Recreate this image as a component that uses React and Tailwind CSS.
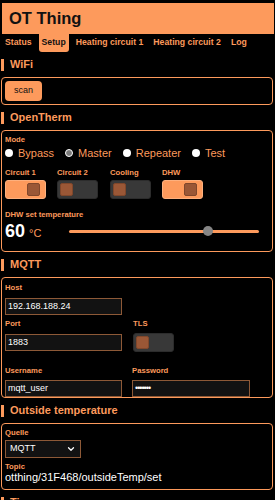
import { ChevronDown } from "lucide-react";

const OR = "#fd9a5c";

function Heading({ title }) {
  return (
    <div className="h-[25px] flex items-center">
      <div className="w-[3px] h-[12px] bg-[#fd9a5c] ml-[1px]"></div>
      <span className="ml-[6px] text-[11px] font-bold text-[#fd9a5c] leading-none">{title}</span>
    </div>
  );
}

function Box({ children, className = "" }) {
  return (
    <div className={"mx-[1px] mr-[2px] border border-[#fd9a5c] rounded-[4px] px-[3px] " + className}>
      {children}
    </div>
  );
}

function Label({ children, className = "" }) {
  return (
    <div className={"text-[7.7px] font-bold text-[#fd9a5c] leading-[9px] " + className}>{children}</div>
  );
}

function Toggle({ on }) {
  return (
    <div
      className={
        "w-[41px] h-[19px] rounded-[3px] border flex items-center px-[2px] " +
        (on ? "bg-[#fd9a5c] border-[#fdb07e]" : "bg-[#383838] border-[#2c2c2c]")
      }
    >
      <div
        className={
          "w-[13px] h-[13px] rounded-[2px] bg-[#9a5736] border border-[#80472b] " +
          (on ? "ml-[19px]" : "")
        }
      ></div>
    </div>
  );
}

function Radio({ label, checked }) {
  return (
    <div className="flex items-center mr-[11px]">
      <span
        className={
          "w-[8px] h-[8px] rounded-full " +
          (checked ? "bg-[#7a7a7a] border-[1.5px] border-white" : "bg-white")
        }
      ></span>
      <span className="ml-[5px] text-[11px] text-[#fd9a5c] leading-[14px]">{label}</span>
    </div>
  );
}

function Input({ value, className = "" }) {
  return (
    <div
      className={
        "h-[17px] bg-[#121212] border border-[#8d5937] flex items-center px-[2px] text-[9px] text-white " +
        className
      }
    >
      {value}
    </div>
  );
}

export default function App() {
  const tabs = ["Status", "Setup", "Heating circuit 1", "Heating circuit 2", "Log"];

  return (
    <div className="min-h-screen bg-black overflow-hidden" style={{ fontFamily: '"Liberation Sans", Arial, sans-serif' }}>
      {/* Header */}
      <div className="pt-[3px]">
        <div className="mx-[2px] mr-[1px] h-[31px] bg-[#fd9a5c] flex items-center pl-[7px]">
          <span className="text-[16.5px] font-bold text-[#111] leading-none">OT Thing</span>
        </div>
      </div>

      {/* Tabs */}
      <div className="h-[18px] flex items-stretch pl-[2px] text-[8.7px] font-bold">
        {tabs.map((t) => (
          <div
            key={t}
            className={
              "flex items-center px-[3px] mr-[4px] " +
              (t === "Setup" ? "bg-[#fd9a5c] text-[#111] rounded-b-[3px]" : "text-[#fd9a5c]")
            }
          >
            {t}
          </div>
        ))}
      </div>

      {/* WiFi */}
      <Heading title="WiFi" />
      <Box className="py-[3px]">
        <button className="w-[37px] h-[20px] bg-[#fd9a5c] rounded-[4px] text-[9px] text-[#111] flex items-center justify-center">
          scan
        </button>
      </Box>

      {/* OpenTherm */}
      <Heading title="OpenTherm" />
      <Box className="h-[122px] pt-[4px]">
        <Label>Mode</Label>
        <div className="flex items-center mt-[1px] h-[16px]">
          <Radio label="Bypass" />
          <Radio label="Master" checked />
          <Radio label="Repeater" />
          <Radio label="Test" />
        </div>
        <div className="grid grid-cols-[52px_53px_52px_52px] mt-[7px]">
          {[
            ["Circuit 1", true],
            ["Circuit 2", false],
            ["Cooling", false],
            ["DHW", true],
          ].map(([l, on]) => (
            <div key={l}>
              <Label>{l}</Label>
              <div className="mt-[3px]">
                <Toggle on={on} />
              </div>
            </div>
          ))}
        </div>
        <Label className="mt-[11px]">DHW set temperature</Label>
        <div className="flex items-center h-[22px] mt-[1px]">
          <div className="w-[64px] flex items-baseline">
            <span className="text-[18px] font-bold text-white leading-none">60</span>
            <span className="ml-[4px] text-[11px] text-[#fd9a5c] leading-none">°C</span>
          </div>
          <div className="relative w-[190px] h-[3px] bg-[#fd9a5c] rounded-full">
            <div className="absolute left-[134px] top-[-4px] w-[10px] h-[10px] rounded-full bg-[#858585]"></div>
          </div>
        </div>
      </Box>

      {/* MQTT */}
      <Heading title="MQTT" />
      <Box className="h-[121px] pt-[5px]">
        <Label>Host</Label>
        <Input value="192.168.188.24" className="w-[117px] mt-[6px]" />
        <div className="grid grid-cols-[128px_1fr] mt-[4px]">
          <div>
            <Label>Port</Label>
            <Input value="1883" className="w-[117px] mt-[6px]" />
          </div>
          <div>
            <Label>TLS</Label>
            <div className="mt-[5px]">
              <Toggle on={false} />
            </div>
          </div>
        </div>
        <div className="grid grid-cols-[127px_1fr] mt-[14px]">
          <div>
            <Label>Username</Label>
            <Input value="mqtt_user" className="w-[117px] mt-[5px]" />
          </div>
          <div>
            <Label>Password</Label>
            <Input value="•••••••" className="w-[118px] mt-[5px] text-[7px] tracking-[-1px]" />
          </div>
        </div>
      </Box>

      {/* Outside temperature */}
      <Heading title="Outside temperature" />
      <Box className="h-[67px] pt-[4px]">
        <Label>Quelle</Label>
        <div className="w-[76px] h-[18px] mt-[3px] bg-[#121212] border border-[#8d5937] flex items-center justify-between px-[4px] text-[9px] text-white">
          <span>MQTT</span>
          <ChevronDown size={10} strokeWidth={3} color="#ffffff" />
        </div>
        <Label className="mt-[4px]">Topic</Label>
        <div className="text-[11px] text-white leading-[12px]">otthing/31F468/outsideTemp/set</div>
      </Box>

      <Heading title="Time" />
    </div>
  );
}
